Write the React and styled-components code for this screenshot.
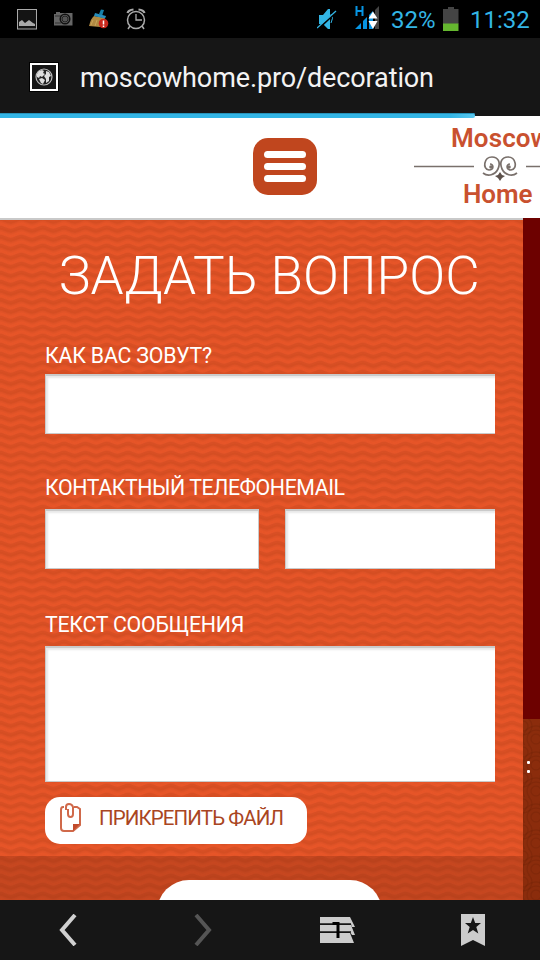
import React from 'react';
import styled, { createGlobalStyle } from 'styled-components';

const wave = (y) =>
  `M-10.670 ${y} ` + Array.from({ length: 5 }, () => 'c3.900 0 6.700 -3.200 10.670 -3.200 s6.800 3.200 10.670 3.200').join(' ');

const waves = `url("data:image/svg+xml,${encodeURIComponent(
  `<svg xmlns='http://www.w3.org/2000/svg' width='64' height='9' viewBox='0 0 64 9'><g fill='none'><g stroke='#d14b22' stroke-opacity='.45'><path stroke-width='4' d='${wave(9)}'/><path stroke-width='4' d='${wave(0)}'/><path stroke-width='1.800' d='${wave(9.5)}'/><path stroke-width='1.800' d='${wave(0.5)}'/></g><g stroke='#ea5628' stroke-opacity='.5'><path stroke-width='3.200' d='${wave(5)}'/><path stroke-width='1.600' d='${wave(5)}'/></g></g></svg>`
)}")`;

const scales = `url("data:image/svg+xml,${encodeURIComponent(
  `<svg xmlns='http://www.w3.org/2000/svg' width='26' height='26'><g fill='none' stroke='#5a1400' stroke-opacity='.18' stroke-width='1.500'><circle cx='13' cy='20' r='5'/><circle cx='13' cy='20' r='9'/><circle cx='13' cy='20' r='13'/><circle cx='0' cy='7' r='5'/><circle cx='26' cy='7' r='9'/><circle cx='0' cy='7' r='9'/></g></svg>`
)}")`;

const GlobalStyle = createGlobalStyle`
  * { box-sizing: border-box; }
  body { margin: 0; background: #000; font-family: Roboto, "Liberation Sans", sans-serif; }
`;

const Screen = styled.div`
  width: 540px;
  height: 960px;
  display: flex;
  flex-direction: column;
  overflow: hidden;
`;

const StatusBar = styled.div`
  flex: none;
  height: 38px;
  background: #000;
  display: flex;
  justify-content: space-between;
  svg { display: block; flex: none; }
`;

const StatusGroup = styled.div`
  display: flex;
  align-items: center;
  padding: ${(p) => p.$pad};
  gap: ${(p) => p.$gap}px;
`;

const StatusText = styled.span`
  color: #33b5e5;
  font-size: 24px;
  line-height: 40px;
  height: 38px;
  width: ${(p) => p.$w}px;
  padding-left: ${(p) => p.$left || 0}px;
  white-space: nowrap;
`;

const AddressBar = styled.div`
  flex: none;
  height: 75px;
  background: #161616;
  display: flex;
  align-items: center;
  gap: 21px;
  padding: 3px 0 0 29px;
`;

const SiteBadge = styled.div`
  width: 30px;
  height: 30px;
  background: #161616;
  border: 1px solid #000;
  outline: 2px solid #fff;
  outline-offset: -3px;
  display: grid;
  place-items: center;
`;

const Address = styled.div`
  color: #f3f3f3;
  font-size: 27px;
  line-height: 32px;
  letter-spacing: -0.12px;
  padding-top: 2px;
  white-space: nowrap;
`;

const Progress = styled.div`
  flex: none;
  height: 5px;
  display: flex;
  background: linear-gradient(#161616 3px, #fff 3px);
`;

const ProgressFill = styled.div`
  width: 475px;
  height: 5px;
  background: linear-gradient(90deg, #33b5e5 450px, #5cc8ee);
  border-radius: 0 2px 2px 0;
  box-shadow: inset 0 1px #2793ba;
`;

const Header = styled.header`
  flex: none;
  height: 100px;
  background: #fff;
  display: flex;
  align-items: flex-start;
  padding: 0 0 0 253px;
`;

const MenuButton = styled.button`
  flex: none;
  width: 64px;
  height: 57px;
  margin: 20px 97px 0 0;
  border: 0;
  border-radius: 15px;
  background: #c0461e;
  padding: 13px 11px;
  display: flex;
  flex-direction: column;
  gap: 5px;
`;

const MenuLine = styled.span`
  width: 42px;
  height: 7px;
  border-radius: 4px;
  background: #fff;
`;

const Logo = styled.div`
  flex: none;
  width: 126px;
  height: 100px;
  color: #c9512f;
  font-size: 26px;
  font-weight: 600;
  line-height: 30px;
  padding-top: 5px;
  svg { display: block; margin: 0 0 -2px; }
`;

const LogoWord = styled.div`
  height: 30px;
  padding-left: ${(p) => p.$left}px;
  letter-spacing: ${(p) => p.$ls}px;
  white-space: nowrap;
`;

const Page = styled.div`
  flex: 1;
  min-height: 0;
  display: grid;
  grid-template-columns: 523px 17px;
`;

const FormPanel = styled.main`
  border-top: 2px solid #c9c9c9;
  display: flex;
  flex-direction: column;
  overflow: hidden;
  background: ${waves} 0 2px, #df5226;
`;

const Title = styled.h1`
  flex: none;
  margin: 24px 0 0 59px;
  height: 64px;
  color: #fff;
  font-size: 53px;
  font-weight: 300;
  line-height: 65px;
  letter-spacing: 0.05px;
  white-space: nowrap;
`;

const Label = styled.div`
  flex: none;
  height: 26px;
  margin-top: ${(p) => p.$top}px;
  color: #fff;
  font-size: 21.33px;
  line-height: 27px;
  letter-spacing: ${(p) => p.$ls}px;
  white-space: nowrap;
`;

const Fields = styled.div`
  display: flex;
  flex-direction: column;
  padding-left: 45px;
  width: 495px;
`;

const Row = styled.div`
  display: flex;
  gap: 26px;
  margin-top: 9px;
`;

const Box = styled.div`
  width: ${(p) => p.$w}px;
  height: ${(p) => p.$h}px;
  margin-top: ${(p) => p.$top || 0}px;
  background: #fff;
  border: solid #cacaca;
  border-width: 2px ${(p) => (p.$right ? 1 : 0)}px 1px 1px;
  box-shadow: inset 2px 2px 2px #e8e8e8;
`;

const Attach = styled.button`
  width: 262px;
  height: 47px;
  margin-top: 15px;
  padding: 0 0 5px 13px;
  border: 0;
  border-radius: 15px;
  background: #fff;
  color: #a94522;
  font-family: inherit;
  font-size: 20.5px;
  letter-spacing: -0.9px;
  display: flex;
  align-items: center;
  gap: 17px;
  white-space: nowrap;
`;

const SubmitStrip = styled.div`
  height: 44px;
  margin-top: 12px;
  padding-top: 24px;
  overflow: hidden;
  background: rgba(122, 38, 14, 0.29);
`;

const Submit = styled.div`
  width: 225px;
  height: 64px;
  margin-left: 157px;
  border-radius: 32px;
  background: #fff;
`;

const Aside = styled.aside`
  display: flex;
  flex-direction: column;
`;

const AsideTop = styled.div`
  height: 501px;
  background: #6d0100;
`;

const AsideBottom = styled.div`
  flex: 1;
  background: ${scales}, #8b2c0c;
  padding: 42px 0 0 4px;
  display: flex;
  flex-direction: column;
  gap: 6px;
`;

const Dot = styled.i`
  width: 3px;
  height: 3px;
  border-radius: 1px;
  background: #fff;
`;

const NavBar = styled.nav`
  flex: none;
  height: 60px;
  background: #161616;
  display: grid;
  grid-template-columns: repeat(4, 135px);
  align-items: center;
  justify-items: center;
  svg { display: block; }
`;

const PhotoIcon = () => (
  <svg width="20" height="21" viewBox="0 0 20 21">
    <rect x=".5" y=".5" width="19" height="19.500" fill="#141414" stroke="#aaa" />
    <path d="M2 17V13l3-2 3 3 4-3 4 3 2 1v2z" fill="#aaa" />
  </svg>
);
const CameraIcon = () => (
  <svg width="19" height="14" viewBox="0 0 19 14">
    <path d="M0 2h2V0h4v1h12.500v12.500H0z" fill="#666" />
    <path d="M1 4h6M1 11h6" stroke="#333" />
    <circle cx="11" cy="7" r="4.700" fill="#666" stroke="#111" strokeWidth="1.600" />
    <circle cx="11" cy="7" r="3" fill="#555" stroke="#222" />
  </svg>
);
const BroomIcon = () => (
  <svg width="20" height="20" viewBox="0 0 20 20">
    <path d="M10 5l2-4.500 3 .5-2 6z" fill="#1781aa" />
    <path d="M5 7Q2 9 0 17l11 1 5-9z" fill="#b18a42" />
    <path d="M4 11l-2 5M8 11l-2 6" stroke="#c9a45a" />
    <path d="M6 4l11 3-1 2.500L5 7z" fill="#278ebd" />
    <circle cx="14.500" cy="14.500" r="4.800" fill="#c9281d" />
    <path d="M14.500 11.500v4M14.500 16.500v1.500" stroke="#fff" strokeWidth="1.500" />
  </svg>
);
const AlarmIcon = () => (
  <svg width="20" height="22" viewBox="0 0 20 22" fill="none" stroke="#aaa">
    <circle cx="10" cy="12" r="8.500" strokeWidth="1.500" />
    <path d="M10 6v6h6" strokeWidth="1.300" />
    <path d="M1.500 5q1-3 6-3.500M18.500 5q-1-3-6-3.500" strokeWidth="2.200" />
    <path d="M4 18l-2 3M16 18l2 3" strokeWidth="1.500" />
  </svg>
);
const MuteIcon = () => (
  <svg width="20" height="22" viewBox="0 0 20 22">
    <path d="M2 7h4l5-6h2v20h-2l-5-5H2z" fill="#33b5e5" />
    <path d="M14 6q3 4 0 9" fill="none" stroke="#33b5e5" />
    <path d="M1 21L20 3" stroke="#000" strokeWidth="2" />
    <path d="M0 20L19 3" stroke="#33b5e5" strokeWidth="1.300" />
  </svg>
);
const SignalIcon = () => (
  <svg width="25" height="24" viewBox="0 0 25 24">
    <path d="M1.500 0v10M7.500 0v10M1 5h7" stroke="#0795e3" strokeWidth="2" fill="none" />
    <path d="M0 23l6-6v6zM8 15l4-4v12H8zM14 9l4-4v18h-4z" fill="#0795e3" />
    <path d="M20 4l4-4v23h-4z" fill="#444" />
    <path d="M18 5.500l4.500 7h-9zM13.500 15h9L18 23z" fill="#fff" />
  </svg>
);
const BatteryIcon = () => (
  <svg width="16" height="24" viewBox="0 0 16 24">
    <path d="M5 0h6v2h4.500v15H0V2h5z" fill="#444" />
    <path d="M0 16.500h15.500V24H0z" fill="#65b72f" />
  </svg>
);
const GlobeIcon = () => (
  <svg width="18" height="18" viewBox="0 0 18 18">
    <circle cx="9" cy="9" r="8" fill="#222" stroke="#bbb" strokeWidth="1.200" />
    <path d="M2 6l2-3 3-1 2 1-1 2 2 1-3 3-2-1-1 2-2-1zM4 11l3-1 3 2-1 2-1 2-2-1zM11 3l3 1 2 4-2 1v4l-3 2 0-4-2-3 2-2z" fill="#ddd" />
  </svg>
);
const AttachIcon = () => (
  <svg width="24" height="30" viewBox="0 0 24 30" fill="none" stroke="#d0694a">
    <path d="M6 4H5Q3 4 3 7v18q0 3 3 3h9l7-6V6l-3-2h-3" strokeWidth="2" />
    <path d="M22 21h-7v7z" fill="#c14b2b" stroke="none" />
    <path d="M8 7V4q0-3 3-3t4 3v7q0 3-2.500 3T10 11V6" strokeWidth="2" />
  </svg>
);
const LogoOrnament = () => (
  <svg width="126" height="28" viewBox="0 35 126 28">
    <path d="M0 48.500h60M112 48.500h14" stroke="#79706b" strokeWidth="1.500" />
    <g fill="none" stroke="#79706b" strokeWidth="1.700">
      <path d="M69 55c5 4 12 2 15-4 3-7 0-12-6-12-8 0-10 12-3 13 5 0 5-6 1-6" />
      <path d="M103 55c-5 4-12 2-15-4-3-7 0-12 6-12 8 0 10 12 3 13-5 0-5-6-1-6" />
    </g>
    <circle cx="77" cy="49" r="1.800" fill="#79706b" />
    <circle cx="95" cy="49" r="1.800" fill="#79706b" />
    <path d="M86 54l2 3 3 1-3 2-2 3-2-3-3-2 3-1z" fill="#5d514b" />
  </svg>
);

export default function App() {
  return (
    <Screen>
      <GlobalStyle />
      <StatusBar>
        <StatusGroup $pad="0 0 0 17px" $gap={16.5}>
          <PhotoIcon /><CameraIcon /><BroomIcon /><AlarmIcon />
        </StatusGroup>
        <StatusGroup $pad="0 8px 0 0" $gap={7}>
          <MuteIcon />
          <StatusGroup $pad="0 4px 2px 11px" $gap={0}><SignalIcon /></StatusGroup>
          <StatusText $w={45}>32%</StatusText>
          <BatteryIcon />
          <StatusText $w={66} $left={4}>11:32</StatusText>
        </StatusGroup>
      </StatusBar>
      <AddressBar>
        <SiteBadge><GlobeIcon /></SiteBadge>
        <Address>moscowhome.pro/decoration</Address>
      </AddressBar>
      <Progress><ProgressFill /></Progress>
      <Header>
        <MenuButton aria-label="Меню"><MenuLine /><MenuLine /><MenuLine /></MenuButton>
        <Logo>
          <LogoWord $left={37} $ls={0.1}>Moscow</LogoWord>
          <LogoOrnament />
          <LogoWord $left={49} $ls={-0.1}>Home</LogoWord>
        </Logo>
      </Header>
      <Page>
        <FormPanel>
          <Title>ЗАДАТЬ ВОПРОС</Title>
          <Fields>
            <Label $top={34} $ls={-0.2}>КАК ВАС ЗОВУТ?</Label>
            <Box $w={450} $h={60} $top={6} />
            <Label $top={40} $ls={-0.43}>КОНТАКТНЫЙ ТЕЛЕФОНEMAIL</Label>
            <Row>
              <Box $w={214} $h={60} $right />
              <Box $w={210} $h={60} />
            </Row>
            <Label $top={42} $ls={-0.25}>ТЕКСТ СООБЩЕНИЯ</Label>
            <Box $w={450} $h={136} $top={9} />
            <Attach><AttachIcon />ПРИКРЕПИТЬ ФАЙЛ</Attach>
          </Fields>
          <SubmitStrip><Submit /></SubmitStrip>
        </FormPanel>
        <Aside>
          <AsideTop />
          <AsideBottom><Dot /><Dot /></AsideBottom>
        </Aside>
      </Page>
      <NavBar>
        <svg width="18" height="32" viewBox="0 0 18 32"><path d="M16 1L3 16l13 15" fill="none" stroke="#d0d0d0" strokeWidth="4" /></svg>
        <svg width="18" height="32" viewBox="0 0 18 32"><path d="M2 1l13 15L2 31" fill="none" stroke="#555" strokeWidth="4" /></svg>
        <svg width="36" height="28" viewBox="0 0 36 28">
          <path d="M0 1h30l5 10h-3l-1-3H0zM0 9h31l4 10h-3l-2-3H0zM0 17h30l4 10H0z" fill="#ccc" />
          <path d="M0 8h31M0 16h31" stroke="#161616" strokeWidth="1.500" />
          <path d="M12.500 7.500h5.500V22" fill="none" stroke="#000" strokeWidth="3" />
        </svg>
        <svg width="24" height="32" viewBox="0 0 24 32">
          <path d="M0 0h24v32l-12-6-12 6z" fill="#ccc" />
          <path d="M12 3l2.200 6H20l-4.700 4 2 6.500L12 16l-5.300 3.500 2-6.500L4 9h5.800z" fill="#161616" />
        </svg>
      </NavBar>
    </Screen>
  );
}
